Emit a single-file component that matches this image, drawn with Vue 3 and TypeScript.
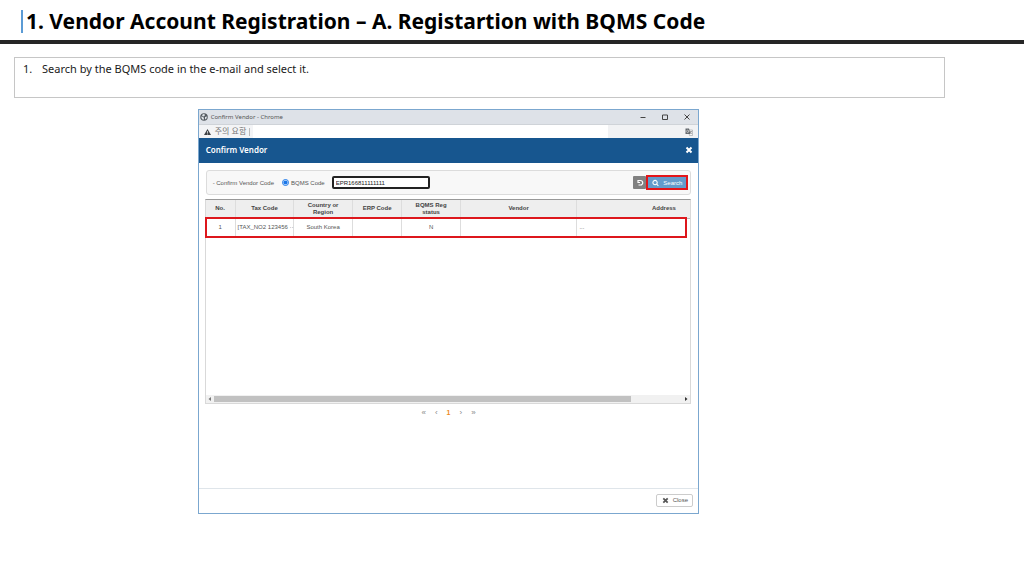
<script setup lang="ts">
import { ref } from 'vue'

interface VendorRow {
  no: number
  taxCode: string
  country: string
  erpCode: string
  status: string
  vendor: string
  address: string
}

const code = ref<string>('EPR166811111111')
const mode = ref<string>('bqms')
const columns: string[] = ['No.', 'Tax Code', 'Country or Region', 'ERP Code', 'BQMS Reg status', 'Vendor', 'Address']
const rows: VendorRow[] = [
  { no: 1, taxCode: '[TAX_NO2 123456 ··', country: 'South Korea', erpCode: '', status: 'N', vendor: '', address: '...' },
]
</script>

<template>
  <div class="slide">
    <header class="slide-head">
      <h1>1. Vendor Account Registration – A. Registartion with BQMS Code</h1>
    </header>

    <ol class="steps">
      <li><span class="step-no">1.</span><span>Search by the BQMS code in the e-mail and select it.</span></li>
    </ol>

    <section class="window" aria-label="Confirm Vendor">
      <div class="titlebar">
        <svg class="globe" viewBox="0 0 16 16" aria-hidden="true">
          <circle cx="8" cy="8" r="7.5" fill="#555b61" />
          <path d="M2 7l4 1 2 2-1 4-3-2zM6 2l4 1-1 3-3 1-2-2zM10 8l4-1-1 4-3 2z" fill="#dfe3e8" />
        </svg>
        <span class="window-name">Confirm Vendor - Chrome</span>
        <button type="button" class="win-btn" aria-label="Minimize">
          <svg viewBox="0 0 8 8"><path d="M1.500 4.500h5" /></svg>
        </button>
        <button type="button" class="win-btn" aria-label="Maximize">
          <svg viewBox="0 0 8 8"><path d="M1.500 2h5v4.500h-5z" /></svg>
        </button>
        <button type="button" class="win-btn" aria-label="Close window">
          <svg viewBox="0 0 8 8"><path d="m1.500 1.500 5 5m0-5-5 5" /></svg>
        </button>
      </div>

      <div class="urlbar">
        <div class="warn">
          <svg viewBox="0 0 16 16" aria-hidden="true">
            <path d="M8 1 16 15H0z" fill="#3f4246" />
            <path d="M8 6v4M8 11.500v2" stroke="#fff" stroke-width="1.800" />
          </svg>
          <span>주의 요함</span>
        </div>
        <div class="url-blank"></div>
        <div class="url-tools">
          <svg viewBox="0 0 16 16" aria-hidden="true">
            <path d="M7 4h8v11H9z" fill="#f5f5f5" stroke="#8b8f93" />
            <path d="M1 1h7l3 11H1z" fill="#62676c" />
            <path d="M7.500 5.500A2.500 2.500 0 1 0 7.500 8V6.500H5.500" fill="none" stroke="#fff" />
            <path d="M10 7h4M12 6v1c0 2-1 3-2 4m0-3 4 4" fill="none" stroke="#777" />
          </svg>
        </div>
      </div>

      <div class="modal-head">
        <h2>Confirm Vendor</h2>
        <button type="button" class="modal-x" aria-label="Close dialog">
          <svg viewBox="0 0 8 8"><path d="m1.500 1.500 5 5m0-5-5 5" /></svg>
        </button>
      </div>

      <div class="modal-body">
        <form class="search" @submit.prevent>
          <span class="field-name">- Confirm Vendor Code</span>
          <label class="radio"><input v-model="mode" type="radio" name="mode" value="bqms" />BQMS Code</label>
          <input v-model="code" class="code" type="text" aria-label="BQMS code" spellcheck="false" />
          <span class="spacer"></span>
          <button type="button" class="reset" aria-label="Reset">
            <svg viewBox="0 0 8 8"><path d="M2 1.500h2.500a2.200 2.200 0 0 1 0 4.500H2.500M2 1v2.500h2" /></svg>
          </button>
          <button type="submit" class="go">
            <svg viewBox="0 0 8 8" aria-hidden="true"><circle cx="3.500" cy="3.500" r="2.500" /><path d="M5.300 5.300 7.300 7.300" /></svg>
            Search
          </button>
        </form>

        <div class="grid">
          <div class="grid-view">
            <table>
              <colgroup>
                <col class="c-no" /><col class="c-tax" /><col class="c-country" /><col class="c-erp" /><col class="c-status" /><col class="c-vendor" /><col />
              </colgroup>
              <thead>
                <tr><th v-for="c in columns" :key="c" scope="col">{{ c }}</th></tr>
              </thead>
              <tbody>
                <tr v-for="r in rows" :key="r.no">
                  <td>{{ r.no }}</td>
                  <td class="tax">{{ r.taxCode }}</td>
                  <td>{{ r.country }}</td>
                  <td>{{ r.erpCode }}</td>
                  <td>{{ r.status }}</td>
                  <td>{{ r.vendor }}</td>
                  <td class="address">{{ r.address }}</td>
                </tr>
              </tbody>
            </table>
          </div>
          <div class="row-mark"></div>
          <div class="scroll">
            <svg viewBox="0 0 8 8" aria-hidden="true"><path d="M5 2v4L2.500 4z" fill="#777" /></svg>
            <div class="track"><div class="thumb"></div></div>
            <svg viewBox="0 0 8 8" aria-hidden="true"><path d="M3 2v4l2.500-2z" fill="#333" /></svg>
          </div>
        </div>

        <nav class="pager" aria-label="Pages">
          <a href="#" aria-label="First page">«</a>
          <a href="#" aria-label="Previous page">‹</a>
          <a href="#" class="current" aria-current="page">1</a>
          <a href="#" aria-label="Next page">›</a>
          <a href="#" aria-label="Last page">»</a>
        </nav>
      </div>

      <footer class="modal-foot">
        <button type="button" class="close">
          <svg viewBox="0 0 8 8" aria-hidden="true"><path d="m1.500 1.500 5 5m0-5-5 5" /></svg>
          Close
        </button>
      </footer>
    </section>
  </div>
</template>

<style>
body {
  margin: 0;
  background: #fff;
}
</style>

<style scoped>
* {
  box-sizing: border-box;
}
.slide {
  font-family: "Noto Sans", "Noto Sans CJK KR", sans-serif;
  color: #000;
}
button {
  font: inherit;
  padding: 0;
  border: 0;
  background: none;
  cursor: pointer;
}
svg {
  display: block;
  width: 8px;
  height: 8px;
  flex: none;
}
.slide-head {
  padding: 10px 21px 7px;
  border-bottom: 4px solid #262626;
}
h1 {
  margin: 0;
  padding-left: 3px;
  border-left: 2px solid #5b9bd5;
  font-size: 21px;
  line-height: 22px;
  padding-bottom: 1px;
  font-weight: 700;
  white-space: nowrap;
}
.steps {
  list-style: none;
  margin: 13px 79px 0 14px;
  padding: 3px 8px;
  min-height: 41px;
  border: 1px solid #c6c6c6;
  font-size: 11px;
  line-height: 16px;
  color: #1a1a1a;
}
.steps li {
  display: flex;
}
.step-no {
  width: 19px;
}
.window {
  width: 49%;
  margin: 11px 0 0 19.3%;
  border: 1px solid #7ba7cf;
  font-family: "Liberation Sans", "Noto Sans CJK KR", sans-serif;
  font-size: 6px;
  color: #555;
}
.titlebar {
  display: flex;
  align-items: center;
  height: 15px;
  padding: 0 0 0 1px;
  background: #dee2e8;
  border-bottom: 1px solid #cfd3d8;
}
.globe {
  margin-right: 3px;
}
.window-name {
  flex: 1;
  font-family: "Noto Sans", sans-serif;
}
.win-btn {
  width: 22px;
  display: flex;
  justify-content: center;
}
.win-btn path {
  fill: none;
  stroke: #444;
}
.urlbar {
  display: flex;
  height: 13px;
  background: #fff;
}
.warn {
  display: flex;
  align-items: center;
  gap: 4px;
  padding: 0 3px 0 5px;
  background: #f3f4f6;
  font-size: 8px;
  line-height: 12px;
  color: #777;
}
.warn svg {
  width: 7px;
}
.warn span {
  padding-right: 3px;
  border-right: 1px solid #bbb;
  line-height: 8px;
}
.url-blank {
  flex: 1;
}
.url-tools {
  display: flex;
  align-items: center;
  justify-content: flex-end;
  width: 18%;
  padding-right: 5px;
  background: #f1f2f4;
}
.modal-head {
  display: flex;
  align-items: center;
  justify-content: space-between;
  height: 25px;
  padding: 0 5px 2px 7px;
  background: #17568f;
  color: #fff;
}
h2 {
  margin: 0;
  font: 600 8px/14px "Noto Sans", sans-serif;
}
.modal-x path,
.close path {
  fill: none;
  stroke: currentColor;
  stroke-width: 2;
}
.modal-x {
  color: #fff;
}
.modal-body {
  padding: 7px 7px 0;
  min-height: 325px;
}
.search {
  display: flex;
  align-items: center;
  height: 25px;
  padding: 0 2px 0 6px;
  border: 1px solid #dcdcdc;
  border-radius: 3px;
  background: #f8f8f8;
}
.field-name {
  white-space: nowrap;
}
.radio {
  display: flex;
  align-items: center;
  gap: 2px;
  margin: 0 7px 0 8px;
  white-space: nowrap;
}
.radio input {
  width: 7px;
  height: 7px;
  margin: 0;
  accent-color: #1976e8;
}
.code {
  width: 98px;
  height: 13px;
  padding: 0 2px;
  border: 2px solid #222;
  border-radius: 2px;
  background: #fff;
  font: 6px "Liberation Sans", sans-serif;
  color: #222;
  text-decoration: underline #e88;
}
.spacer {
  flex: 1;
}
.reset {
  display: flex;
  align-items: center;
  justify-content: center;
  width: 13px;
  height: 13px;
  border-radius: 1px;
  background: #818181;
}
.reset path,
.go path,
.go circle {
  fill: none;
  stroke: #fff;
  stroke-width: 1.2;
}
.go {
  display: flex;
  align-items: center;
  justify-content: center;
  gap: 4px;
  width: 42px;
  height: 15px;
  border: 2px solid #e3151a;
  background: #639bcb;
  color: #fff;
}
.go svg {
  width: 7px;
}
.grid {
  position: relative;
  margin: 4px 0 0 -1px;
  border: 1px solid #d9d9d9;
  border-top: 1px solid #999;
}
.grid-view {
  overflow: hidden;
  min-height: 195px;
}
table {
  width: 112.6%;
  table-layout: fixed;
  border-collapse: collapse;
}
.c-no { width: 5.4%; }
.c-tax { width: 10.8%; }
.c-country { width: 10.7%; }
.c-erp { width: 9.1%; }
.c-status { width: 10.7%; }
.c-vendor { width: 21.4%; }
th,
td {
  padding: 0 2px;
  border-right: 1px solid #ddd;
  text-align: center;
}
th {
  height: 18px;
  padding: 0 8px;
  background: #eee;
  border-bottom: 1px solid #bbb;
  line-height: 7px;
  color: #444;
}
th:first-child {
  padding: 0;
}
td {
  height: 18px;
  white-space: nowrap;
}
td.tax,
td.address {
  text-align: left;
}
td.tax {
  padding-right: 0;
}
.row-mark {
  position: absolute;
  inset: 17px 3px auto -1px;
  height: 21px;
  border: 2px solid #dd171c;
  pointer-events: none;
}
.scroll {
  display: flex;
  align-items: center;
  height: 8px;
  background: #f1f1f1;
}
.track {
  flex: 1;
}
.thumb {
  width: 89%;
  height: 6px;
  background: #c1c1c1;
}
.pager {
  display: flex;
  justify-content: center;
  gap: 9px;
  margin-top: 4px;
  font-size: 8px;
  line-height: 10px;
}
.pager a {
  color: #888;
  text-decoration: none;
}
.pager .current {
  font-size: 7px;
  font-weight: 700;
  color: #ee8a24;
}
.modal-foot {
  display: flex;
  justify-content: flex-end;
  align-items: center;
  height: 25px;
  padding: 0 5px 2px 0;
  border-top: 1px solid #dfe5ea;
}
.close {
  display: flex;
  align-items: center;
  justify-content: center;
  gap: 4px;
  width: 37px;
  height: 13px;
  border: 1px solid #ccc;
  border-radius: 2px;
  color: #555;
}
.close svg {
  width: 7px;
  height: 7px;
}
</style>
